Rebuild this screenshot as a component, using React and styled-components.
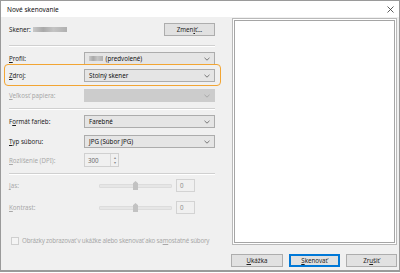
import React from 'react'
import styled, { createGlobalStyle } from 'styled-components'

const GlobalStyle = createGlobalStyle`
	html, body {
		margin: 0;
		padding: 0;
		background: #ffffff;
	}
	body {
		font-family: "Noto Sans", "Open Sans", sans-serif;
		font-size: 6.2px;
		color: #1e1e1e;
	}
	u {
		text-underline-offset: 1px;
	}
`

const Chevron = () => (
	<svg width="6" height="4" viewBox="0 0 6 4">
		<path d="M0.5 0.8 L3 3.2 L5.5 0.8" fill="none" stroke="#5a5a5a" strokeWidth="0.8" />
	</svg>
)

const Close = () => (
	<svg width="7" height="7" viewBox="0 0 7 7">
		<path d="M0.5 0.5 L6.5 6.5 M6.5 0.5 L0.5 6.5" stroke="#333" strokeWidth="0.8" />
	</svg>
)

const Select = ({ children, disabled }) => (
	<Combo $disabled={disabled}>
		<span>{children}</span>
		<Chevron />
	</Combo>
)

const Slider = () => (
	<Track>
		<Thumb />
	</Track>
)

const App = () => {
	return (
		<>
			<GlobalStyle />
			<Dialog>
				<TitleBar>
					<span>Nové skenovanie</span>
					<Close />
				</TitleBar>

				<Body>
					<Left>
						<Row $h={14} $mt={5}>
							<ScannerName>
								Skener:
								<Blur $w={34} />
							</ScannerName>
							<Button $w={51}>Zmen<u>i</u>ť...</Button>
						</Row>

						<Separator $mt={9} />

						<Row $h={13} $mt={5}>
							<Label><u>P</u>rofil:</Label>
							<Select><Blur $w={14} /> (predvolené)</Select>
						</Row>

						<Highlight $h={13} $mt={4}>
							<Label><u>Z</u>droj:</Label>
							<Select>Stolný skener</Select>
						</Highlight>

						<Row $h={13} $mt={7}>
							<Label $disabled><u>V</u>eľkosť papiera:</Label>
							<Select disabled />
						</Row>

						<Separator $mt={6} />

						<Row $h={13} $mt={5}>
							<Label>F<u>o</u>rmát farieb:</Label>
							<Select>Farebné</Select>
						</Row>

						<Row $h={13} $mt={7}>
							<Label><u>T</u>yp súboru:</Label>
							<Select>JPG (Súbor JPG)</Select>
						</Row>

						<Row $h={14} $mt={5}>
							<Label $disabled><u>R</u>ozlíšenie (DPI):</Label>
							<Spin>
								<span>300</span>
								<SpinArrows>
									<i>▴</i>
									<i>▾</i>
								</SpinArrows>
							</Spin>
						</Row>

						<Separator $mt={6} />

						<Row $h={13} $mt={4}>
							<Label $disabled><u>J</u>as:</Label>
							<Slider />
							<ValueBox>0</ValueBox>
						</Row>

						<Row $h={13} $mt={9}>
							<Label $disabled><u>K</u>ontrast:</Label>
							<Slider />
							<ValueBox>0</ValueBox>
						</Row>

						<CheckRow>
							<Check />
							<span>Obrázky zobrazovať v ukážke alebo skenovať ako sa<u>m</u>ostatné súbory</span>
						</CheckRow>
					</Left>

					<Right>
						<Preview />
						<Buttons>
							<Button $w={52}><u>U</u>kážka</Button>
							<Button $w={51} $primary><u>S</u>kenovať</Button>
							<Button $w={51}>Zr<u>u</u>šiť</Button>
						</Buttons>
					</Right>
				</Body>
			</Dialog>
		</>
	)
}

export default App

const Dialog = styled.div`
	width: 400px;
	height: 272px;
	box-sizing: border-box;
	border: 1px solid #9a9a9a;
	border-bottom-width: 2px;
	background: #f0f0f0;
	display: flex;
	flex-direction: column;
`

const TitleBar = styled.div`
	height: 16px;
	background: #ffffff;
	display: flex;
	align-items: center;
	justify-content: space-between;
	padding: 0 5px 0 6px;
	color: #111;
	font-size: 6.5px;
`

const Body = styled.div`
	flex: 1;
	display: flex;
	padding-right: 3px;
`

const Left = styled.div`
	width: 206px;
	padding-left: 8px;
	display: flex;
	flex-direction: column;
`

const Row = styled.div`
	height: ${p => p.$h}px;
	margin-top: ${p => p.$mt}px;
	display: flex;
	align-items: center;
`

const Highlight = styled(Row)`
	position: relative;

	&::after {
		content: '';
		position: absolute;
		left: -5px;
		right: -6px;
		top: -5px;
		bottom: -4px;
		border: 1.5px solid #f2a533;
		border-radius: 4px;
	}
`

const Label = styled.div`
	width: 75px;
	flex-shrink: 0;
	white-space: nowrap;
	color: ${p => (p.$disabled ? '#a8a8a8' : '#1e1e1e')};
`

const ScannerName = styled.div`
	flex: 1;
	display: flex;
	align-items: center;
	gap: 2px;
`

const Blur = styled.span`
	display: inline-block;
	width: ${p => p.$w}px;
	height: 5px;
	background: linear-gradient(90deg, #c9c9c9, #a9a9a9 30%, #c4c4c4 60%, #b0b0b0);
	filter: blur(0.6px);
`

const Combo = styled.div`
	width: 131px;
	height: 100%;
	box-sizing: border-box;
	display: flex;
	align-items: center;
	justify-content: space-between;
	padding: 0 4px 0 4px;
	background: ${p => (p.$disabled ? '#cccccc' : '#e5e5e5')};
	border: 1px solid ${p => (p.$disabled ? '#cccccc' : '#acacac')};
	color: #111;

	span {
		display: flex;
		align-items: center;
		gap: 1px;
		white-space: pre;
	}

	svg {
		opacity: ${p => (p.$disabled ? 0.4 : 1)};
	}
`

const Button = styled.div`
	width: ${p => p.$w}px;
	height: 13px;
	box-sizing: border-box;
	display: flex;
	align-items: center;
	justify-content: center;
	background: #e1e1e1;
	border: 1px solid ${p => (p.$primary ? '#0078d7' : '#adadad')};
	box-shadow: ${p => (p.$primary ? 'inset 0 0 0 1px #0078d7' : 'none')};
	color: #1e1e1e;
	white-space: nowrap;
`

const Separator = styled.div`
	height: 1px;
	margin-top: ${p => p.$mt}px;
	width: 206px;
	background: #d0d0d0;
	border-bottom: 1px solid #ffffff;
`

const Spin = styled.div`
	width: 35px;
	height: 100%;
	box-sizing: border-box;
	border: 1px solid #d0d0d0;
	background: #f0f0f0;
	display: flex;
	align-items: center;
	justify-content: space-between;
	padding-left: 3px;
	color: #6d6d6d;
`

const SpinArrows = styled.div`
	width: 7px;
	height: 100%;
	border-left: 1px solid #d8d8d8;
	display: flex;
	flex-direction: column;
	align-items: center;
	justify-content: center;
	font-size: 4px;
	line-height: 5px;
	color: #8a8a8a;

	i {
		font-style: normal;
	}
`

const Track = styled.div`
	width: 71px;
	height: 2px;
	margin-left: 15px;
	background: #e6e6e6;
	border: 1px solid #dcdcdc;
	border-radius: 1px;
	display: flex;
	justify-content: center;
	align-items: center;
`

const Thumb = styled.div`
	width: 5px;
	height: 9px;
	flex-shrink: 0;
	background: #c2c2c2;
	clip-path: polygon(0 25%, 50% 0, 100% 25%, 100% 100%, 0 100%);
`

const ValueBox = styled.div`
	width: 19px;
	height: 100%;
	box-sizing: border-box;
	margin-left: 4px;
	border: 1px solid #d3d3d3;
	background: #f0f0f0;
	color: #8d8d8d;
	display: flex;
	align-items: center;
	padding-left: 3px;
`

const CheckRow = styled.div`
	margin-top: 22px;
	padding-left: 2px;
	display: flex;
	align-items: center;
	gap: 3px;
	color: #a8a8a8;
	white-space: nowrap;
	letter-spacing: -0.18px;
`

const Check = styled.div`
	width: 8px;
	height: 8px;
	flex-shrink: 0;
	box-sizing: border-box;
	border: 1px solid #cfcfcf;
	background: #f4f4f4;
`

const Right = styled.div`
	flex: 1;
	padding-left: 17px;
	display: flex;
	flex-direction: column;
`

const Preview = styled.div`
	height: 227px;
	margin-top: 1px;
	box-sizing: border-box;
	border: 1px solid #b9b9b9;
	background: #ffffff;
	box-shadow: inset 0 0 0 1px #ffffff, inset 0 0 0 2px #a5a5a5;
`

const Buttons = styled.div`
	display: flex;
	gap: 6px;
	margin-top: 9px;
	margin-left: -1px;
`
